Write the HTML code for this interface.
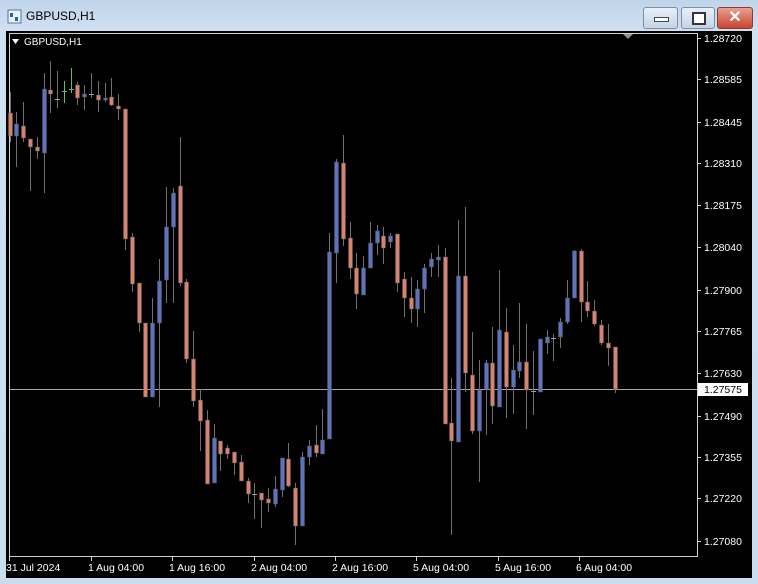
<!DOCTYPE html>
<html><head><meta charset="utf-8"><style>
html,body{margin:0;padding:0;width:758px;height:584px;overflow:hidden;background:#c9dcf0;font-family:"Liberation Sans",sans-serif}
#win{position:absolute;left:0;top:0;width:758px;height:584px;background:linear-gradient(#c0d4ea,#cfe0f2 30px,#c9dcf0)}
.title{position:absolute;left:26px;top:9px;font-size:12px;color:#000}
.btn{position:absolute;top:7px;height:20px;border:1px solid #7a8ea8;border-radius:3px;background:linear-gradient(#e8f0f8,#c4d4e6)}
.cls{background:linear-gradient(#e8a090,#c8452e);border-color:#8a3a30}
svg{position:absolute;left:0;top:0}
</style></head><body><div id="win">
<svg width="16" height="16" style="left:7px;top:9px" viewBox="0 0 16 16"><rect x="1" y="1" width="13" height="13" fill="#e8f0fa" stroke="#5078a8"/><rect x="3" y="4" width="3" height="4" fill="#3060a0"/><rect x="8" y="8" width="3" height="4" fill="#3060a0"/></svg>
<div class="title">GBPUSD,H1</div>
<div class="btn" style="left:643px;width:33px"><div style="position:absolute;left:10px;top:9px;width:13px;height:3px;background:#fff;border:1px solid #445"></div></div>
<div class="btn" style="left:681px;width:32px"><div style="position:absolute;left:10px;top:4px;width:10px;height:9px;border:2px solid #334;background:#fff"></div></div>
<div class="btn cls" style="left:717px;width:34px"><div style="position:absolute;left:0;top:0;width:34px;text-align:center;color:#fff;font-weight:bold;font-size:16px;line-height:20px">✕</div></div>
<svg id="ch" width="758" height="584"></svg>
</div>
<script>
var d=[
[10,'r',113,136,92,142],[16,'b',124,136,112,167],[23,'r',126,138,102,142],[30,'r',139,147,139,191],[37,'r',147,151,137,159],[44,'b',89,153,73,193],[50,'r',90,94,61,113],[57,'d',99,99,71,108],[64,'g',91,91,81,103],[71,'g',89,89,68,93],[77,'r',85,98,82,105],[84,'b',94,97,85,110],[91,'d',94,94,73,98],[98,'r',95,100,81,112],[105,'b',98,100,83,102],[111,'r',97,105,78,106],[118,'r',106,109,94,120],[125,'r',109,239,109,250],[132,'r',237,284,233,292],
[139,'r',283,323,283,332],[145,'r',323,397,323,397],[152,'b',323,397,298,397],[159,'b',281,323,259,407],[166,'b',227,280,187,303],[173,'b',193,227,188,303],[180,'r',186,283,137,286],[186,'r',282,359,279,363],[193,'r',359,401,331,407],[200,'r',400,421,389,451],[207,'r',420,484,410,484],[214,'b',438,483,424,483],[220,'r',441,454,441,471],[227,'r',448,454,445,459],[234,'r',452,463,452,475],[241,'r',462,481,455,481],[248,'r',481,494,478,503],[254,'d',494,494,483,519],[261,'r',493,500,493,528],[268,'r',499,503,488,512],[275,'b',489,504,476,507],[282,'b',458,490,458,497],[288,'r',459,486,443,487],[295,'r',488,526,483,545],[302,'b',457,526,452,526],[309,'b',446,457,440,465],[316,'r',445,453,425,457],[322,'b',440,454,409,454],[329,'b',252,439,233,439],[336,'b',162,253,159,283],
[343,'r',163,239,135,246],[350,'r',238,268,222,279],[356,'r',268,294,253,309],[363,'b',268,295,256,295],[370,'b',243,268,222,268],[377,'b',231,243,225,255],[383,'r',236,248,227,264],[390,'b',236,242,233,248],[397,'r',234,283,234,292],[404,'r',279,298,272,317],[411,'r',298,309,277,323],[417,'b',289,309,280,327],[424,'b',268,289,264,313],[431,'b',259,267,253,277],[438,'b',257,260,245,277],[445,'r',257,424,248,424],[451,'r',423,441,378,535],[458,'b',276,442,220,442],[465,'r',276,373,207,392],[472,'r',375,431,332,434],[479,'b',390,431,360,482],[486,'b',363,389,360,435],[492,'r',363,406,327,424],[499,'b',330,407,270,407],[506,'r',332,387,308,418],[513,'b',370,387,345,414],[519,'b',362,371,303,378],[526,'r',362,390,324,429],[533,'d',391,391,351,415],
[540,'b',339,392,339,392],[547,'b',337,343,330,354],[553,'d',338,338,334,361],[560,'b',322,337,318,348],[567,'b',298,322,280,324],[574,'b',251,298,250,298],[581,'r',251,302,249,322],[587,'r',302,311,281,317],[594,'r',311,324,300,326],[601,'r',325,343,320,345],[608,'r',343,348,324,366],[615,'r',347,389,347,393]];
var s='<rect x="6" y="31" width="746" height="547" fill="#000"/>';
s+='<rect x="9.5" y="33.5" width="688" height="523" fill="none" stroke="#d0d0d0"/>';
s+='<polygon points="623,34 633,34 628,39" fill="#909090"/>';
s+='<polygon points="12,39 19,39 15.5,44" fill="#fff"/>';
s+='<text x="24" y="45" font-size="10" fill="#fff" font-family="Liberation Sans">GBPUSD,H1</text>';
s+='<line x1="10" y1="389.5" x2="697" y2="389.5" stroke="#a8a8a8"/>';
d.forEach(function(c){var x=c[0];var col=c[1]=='r'?'#d9826f':c[1]=='b'?'#5d72c0':c[1]=='g'?'#6ab86a':'#a0a0a0';
var wc=c[1]=='g'?'#6ab86a':'#707070';
s+='<line x1="'+(x+.5)+'" y1="'+c[4]+'" x2="'+(x+.5)+'" y2="'+c[5]+'" stroke="'+wc+'"/>';
var h=Math.max(c[3]-c[2],1);
if(c[1]=='d'||c[1]=='g')s+='<rect x="'+(x-2)+'" y="'+c[2]+'" width="5" height="1" fill="'+col+'"/>';
else s+='<rect x="'+(x-1.5)+'" y="'+c[2]+'" width="4" height="'+h+'" fill="'+col+'" stroke="#555" stroke-width="0.5"/>';});
var p=[['1.28720',38],['1.28585',79],['1.28445',122],['1.28310',163],['1.28175',205],['1.28040',247],['1.27900',290],['1.27765',331],['1.27630',373],['1.27490',416],['1.27355',457],['1.27220',498],['1.27080',541]];
p.forEach(function(a){s+='<line x1="697" y1="'+(a[1]+.5)+'" x2="701" y2="'+(a[1]+.5)+'" stroke="#d0d0d0"/><text x="704" y="'+(a[1]+4)+'" font-size="10.5" fill="#fff" font-family="Liberation Sans">'+a[0]+'</text>';});
s+='<rect x="698" y="383" width="50" height="13" fill="#fff"/><text x="704" y="393" font-size="10.5" fill="#000" font-family="Liberation Sans">1.27575</text>';
var t=[['31 Jul 2024',9],['1 Aug 04:00',91],['1 Aug 16:00',172],['2 Aug 04:00',254],['2 Aug 16:00',335],['5 Aug 04:00',416],['5 Aug 16:00',498],['6 Aug 04:00',579]];
t.forEach(function(a){s+='<line x1="'+(a[1]+.5)+'" y1="556" x2="'+(a[1]+.5)+'" y2="561" stroke="#d0d0d0"/><text x="'+(a[1]-3)+'" y="571" font-size="10.5" fill="#fff" font-family="Liberation Sans">'+a[0]+'</text>';});
document.getElementById('ch').innerHTML=s;
</script></body></html>
